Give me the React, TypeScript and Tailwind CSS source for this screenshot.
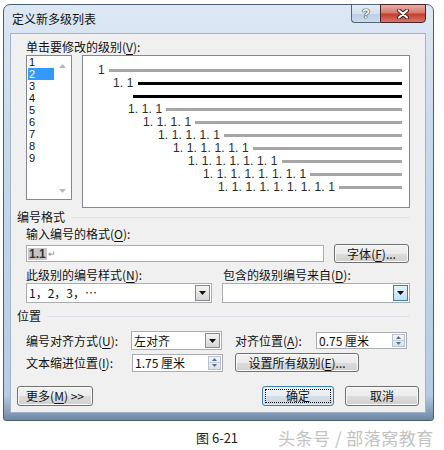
import React from 'react';

const Key = ({ k }: { k: string }) => (
  <>
    (<span className="underline underline-offset-2">{k}</span>)
  </>
);

const btn =
  'rounded-[3px] border border-[#707070] bg-[linear-gradient(to_bottom,#f2f2f2_0%,#ebebeb_50%,#dddddd_51%,#cfcfcf_100%)] shadow-[inset_0_0_0_1px_#fbfbfb] text-[12px] leading-[16px] text-[#111] flex items-center justify-center';

const DropArrow = ({ hot }: { hot?: boolean }) => (
  <div
    className={`w-[15px] self-stretch m-px flex items-center justify-center border ${
      hot
        ? 'border-[#3c7fb1] bg-[linear-gradient(to_bottom,#e3f3fc,#bfe1f5)]'
        : 'border-[#8a8a8a] bg-[linear-gradient(to_bottom,#f4f4f4,#d6d6d6)]'
    }`}
  >
    <svg width="7" height="4" viewBox="0 0 7 4">
      <path d="M0 0H7L3.5 4Z" fill="#111" />
    </svg>
  </div>
);

const Spin = () => (
  <div className="w-[13px] self-stretch m-px flex flex-col border border-[#b6c2d0] bg-[linear-gradient(to_bottom,#f2f5f9,#d9e3ee)]">
    <div className="flex-1 flex items-center justify-center border-b border-[#c4ced9]">
      <svg width="5" height="3" viewBox="0 0 5 3">
        <path d="M0 3H5L2.5 0Z" fill="#5a6b82" />
      </svg>
    </div>
    <div className="flex-1 flex items-center justify-center">
      <svg width="5" height="3" viewBox="0 0 5 3">
        <path d="M0 0H5L2.5 3Z" fill="#5a6b82" />
      </svg>
    </div>
  </div>
);

const Group = ({ title }: { title: string }) => (
  <div className="flex items-center h-[14px]">
    <span className="leading-[14px]">{title}</span>
    <div className="flex-1 h-px bg-[#dde3e8] ml-[6px] mr-[16px]" />
  </div>
);

// preview rows: indent from inner left edge, label, dark line or not
const rows = [
  { pad: 15, label: '1', dark: false },
  { pad: 30, label: '1. 1', dark: true },
  { pad: 50, label: '', dark: true },
  { pad: 45, label: '1. 1. 1', dark: false },
  { pad: 60, label: '1. 1. 1. 1', dark: false },
  { pad: 75, label: '1. 1. 1. 1. 1', dark: false },
  { pad: 90, label: '1. 1. 1. 1. 1. 1', dark: false },
  { pad: 105, label: '1. 1. 1. 1. 1. 1. 1', dark: false },
  { pad: 120, label: '1. 1. 1. 1. 1. 1. 1. 1', dark: false },
  { pad: 135, label: '1. 1. 1. 1. 1. 1. 1. 1. 1', dark: false },
];

export default function App() {
  return (
    <div className="w-[444px] h-[450px] bg-white pt-[4px] font-['Noto_Sans_CJK_SC','Liberation_Sans',sans-serif] text-[12px] text-[#111] overflow-hidden">
      {/* window */}
      <div className="ml-[3px] w-[431px] h-[417px] rounded-t-[7px] rounded-b-[3px] border border-[#4c5d71] bg-[linear-gradient(to_bottom,#dde8f4_0%,#c9daed_30%,#b6cce5_94%,#6f88a6_100%)] flex flex-col pl-[6px] pr-[7px] pb-[7px]">
        {/* title bar */}
        <div className="h-[28px] flex items-start justify-between">
          <span className="mt-[7px] ml-[2px] leading-[14px]">定义新多级列表</span>
          <div className="flex -mt-px">
            <div className="w-[29px] h-[19px] rounded-bl-[4px] border border-r-0 border-[#55667c] bg-[linear-gradient(to_bottom,#e6eef7_0%,#d3e0ee_50%,#bccfe4_51%,#cbdaea_100%)] flex items-center justify-center">
              <span className="text-white font-bold text-[13px] leading-[13px] font-['Liberation_Sans',sans-serif] [text-shadow:0_0_1px_#1d2b3c,0_0_1px_#1d2b3c,0_0_1px_#1d2b3c]">?</span>
            </div>
            <div className="w-[46px] h-[19px] rounded-br-[4px] border border-[#4a2424] bg-[linear-gradient(to_bottom,#eab0a8_0%,#d9796d_45%,#c4402f_55%,#d8766a_100%)] flex items-center justify-center">
              <svg width="12" height="10" viewBox="0 0 12 10">
                <path d="M2 1.5L10 8.5M10 1.5L2 8.5" stroke="#3d1a1a" strokeWidth="4" strokeLinecap="round" />
                <path d="M2 1.5L10 8.5M10 1.5L2 8.5" stroke="#fff" strokeWidth="2.2" strokeLinecap="round" />
              </svg>
            </div>
          </div>
        </div>

        {/* client */}
        <div className="h-[380px] bg-[#f0f0f0] shadow-[inset_0_0_0_1px_#a3b4c8] flex flex-col pl-[7px]">
          <div className="mt-[7px] ml-[9px] leading-[14px]">
            单击要修改的级别<Key k="V" />:
          </div>
          <div className="mt-[1px] ml-[9px] flex items-start gap-[10px]">
            {/* level list */}
            <div className="w-[46px] h-[145px] border border-[#828790] bg-white flex">
              <div className="flex-1 font-['Liberation_Sans',sans-serif] text-[11px] leading-[12px]">
                {['1', '2', '3', '4', '5', '6', '7', '8', '9'].map(n => (
                  <div
                    key={n}
                    className={n === '2' ? 'h-[12px] ml-px pl-px bg-[#3399ff] text-white' : 'h-[12px] pl-[2px]'}
                  >
                    {n}
                  </div>
                ))}
              </div>
              <div className="w-[17px] flex flex-col justify-between items-center pt-[8px] pb-[6px]">
                <svg width="7" height="4" viewBox="0 0 7 4">
                  <path d="M0 4H7L3.5 0Z" fill="#b8b8b8" />
                </svg>
                <svg width="7" height="4" viewBox="0 0 7 4">
                  <path d="M0 0H7L3.5 4Z" fill="#b8b8b8" />
                </svg>
              </div>
            </div>
            {/* preview */}
            <div className="w-[328px] h-[153px] border border-[#828790] bg-white pt-[8px] font-['Liberation_Sans',sans-serif] text-[12px] leading-[13px] text-[#2a2a2a] tracking-[0.15px]">
              {rows.map((r, i) => (
                <div key={i} className="h-[13px] flex items-center pr-[7px]" style={{ paddingLeft: r.pad }}>
                  {r.label && <span className="mr-[4px] whitespace-nowrap">{r.label}</span>}
                  <div className={`flex-1 h-[3px] ${r.dark ? 'bg-black' : 'bg-[#a6a6a6]'}`} />
                </div>
              ))}
            </div>
          </div>

          <div className="mt-[2px]">
            <Group title="编号格式" />
          </div>
          <div className="mt-[3px] ml-[9px] leading-[14px]">
            输入编号的格式<Key k="O" />:
          </div>
          <div className="mt-[3px] ml-[9px] flex items-center gap-[10px]">
            <div className="w-[298px] h-[17px] border border-[#abadb3] bg-white flex items-center pl-px">
              <span className="bg-[#c6c6c6] font-['Liberation_Sans',sans-serif] font-bold text-[12px] leading-[12px] text-[#333] px-px">1.1</span>
              <span className="text-[9px] leading-[12px] text-[#8a8a8a] ml-px">↵</span>
            </div>
            <div className={`${btn} w-[75px] h-[19px]`}>
              字体<Key k="F" />...
            </div>
          </div>
          <div className="mt-[5px] ml-[9px] flex leading-[14px]">
            <span className="w-[197px]">
              此级别的编号样式<Key k="N" />:
            </span>
            <span>
              包含的级别编号来自<Key k="D" />:
            </span>
          </div>
          <div className="mt-[1px] ml-[9px] flex gap-[10px]">
            <div className="w-[186px] h-[20px] border border-[#abadb3] bg-white flex items-center">
              <span className="flex-1 pl-[2px] leading-[14px]">1，2，3，…</span>
              <DropArrow />
            </div>
            <div className="w-[188px] h-[20px] border border-[#abadb3] bg-white flex items-center">
              <span className="flex-1" />
              <DropArrow hot />
            </div>
          </div>

          <div className="mt-[6px]">
            <Group title="位置" />
          </div>
          <div className="mt-[8px] ml-[9px] flex items-center">
            <span className="w-[105px] leading-[14px]">
              编号对齐方式<Key k="U" />:
            </span>
            <div className="w-[91px] h-[19px] border border-[#abadb3] bg-white flex items-center">
              <span className="flex-1 pl-[2px] leading-[14px]">左对齐</span>
              <DropArrow />
            </div>
            <span className="ml-[13px] w-[81px] leading-[14px]">
              对齐位置<Key k="A" />:
            </span>
            <div className="w-[91px] h-[17px] border border-[#abadb3] bg-white flex items-center">
              <span className="flex-1 pl-[2px] leading-[14px]">0.75 厘米</span>
              <Spin />
            </div>
          </div>
          <div className="mt-[3px] ml-[9px] flex items-center">
            <span className="w-[106px] leading-[14px]">
              文本缩进位置<Key k="I" />:
            </span>
            <div className="w-[91px] h-[18px] border border-[#abadb3] bg-white flex items-center">
              <span className="flex-1 pl-[2px] leading-[14px]">1.75 厘米</span>
              <Spin />
            </div>
            <div className={`${btn} ml-[12px] w-[124px] h-[19px]`}>
              设置所有级别<Key k="E" />...
            </div>
          </div>
          <div className="mt-[14px] flex">
            <div className={`${btn} w-[76px] h-[20px]`}>
              更多<Key k="M" />&nbsp;&gt;&gt;
            </div>
            <div className="ml-[169px] w-[72px] h-[20px] rounded-[3px] border border-[#3c7fb1] bg-[linear-gradient(to_bottom,#f0f4f8_0%,#e6edf3_50%,#d6dfe7_51%,#c9d5df_100%)] shadow-[inset_0_0_0_1px_#d8ecf9] flex items-center justify-center outline-1 outline-dotted outline-black outline-offset-[-4px] text-[12px] leading-[16px]">
              确定
            </div>
            <div className={`${btn} ml-[11px] w-[74px] h-[20px]`}>取消</div>
          </div>
        </div>
      </div>

      {/* caption */}
      <div className="mt-[8px] flex items-center">
        <span className="ml-[196px] text-[13px] leading-[17px] text-[#222]">图 6-21</span>
        <span className="ml-[40px] text-[17px] leading-[17px] text-[#c2c2c2] tracking-[0.5px] [text-shadow:0_0_1px_#fff]">头条号 / 部落窝教育</span>
      </div>
    </div>
  );
}
